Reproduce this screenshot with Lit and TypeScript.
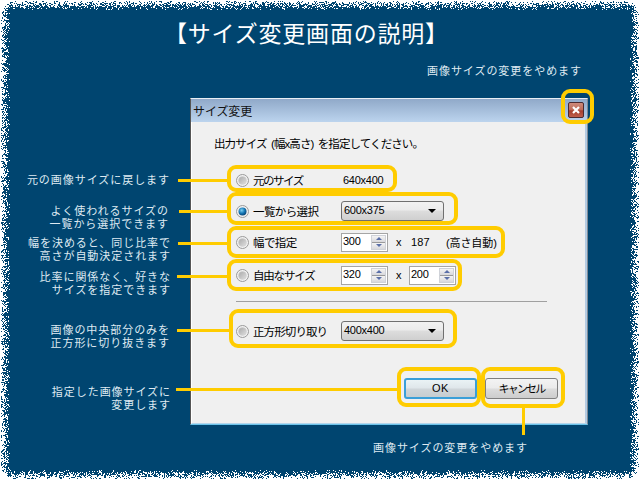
import { LitElement, html, css, svg } from "lit";
import { customElement } from "lit/decorators.js";

function noisePath(): string {
  let seed = 12345;
  const rnd = () => {
    seed = (seed * 1664525 + 1013904223) >>> 0;
    return seed / 4294967296;
  };
  const W = 640, H = 480, R = 9, N = 10;
  let d = "";
  for (let y = 0; y < H; y++) {
    for (let x = 0; x < W; x++) {
      let dist = Math.min(x, y, W - 1 - x, H - 1 - y);
      const cx = x < R + 4 ? R + 4 - x : x > W - R - 5 ? x - (W - R - 5) : 0;
      const cy = y < R + 4 ? R + 4 - y : y > H - R - 5 ? y - (H - R - 5) : 0;
      if (cx > 0 && cy > 0) dist = R + 4 - Math.sqrt(cx * cx + cy * cy);
      if (dist >= N) continue;
      const p = dist < 1 ? 1 : Math.max(0, 0.92 - dist * 0.095);
      if (rnd() < p) d += `M${x} ${y}h1v1h-1z`;
    }
  }
  return d;
}
const NOISE = noisePath();

const NOTES = [
  { top: 174, right: 470, lines: ["元の画像サイズに戻します"] },
  { top: 205, right: 471, lines: ["よく使われるサイズの", "一覧から選択できます"] },
  { top: 237, right: 469, lines: ["幅を決めると、同じ比率で", "高さが自動決定されます"] },
  { top: 271, right: 469, lines: ["比率に関係なく、好きな", "サイズを指定できます"] },
  { top: 324, right: 470, lines: ["画像の中央部分のみを", "正方形に切り抜きます"] },
  { top: 386, right: 469, lines: ["指定した画像サイズに", "変更します"] },
];
const BOXES = [
  [227, 165, 170, 27], [227, 192, 231, 33], [227, 226, 278, 32], [227, 259, 235, 32],
  [229, 309, 228, 39], [397, 367, 84, 40], [481, 367, 84, 41], [561, 89, 33, 35],
];
const LINES = [
  [178, 179, 50, 3], [179, 210, 49, 3], [178, 242, 50, 3], [177, 275, 51, 3],
  [177, 329, 53, 3], [176, 388, 222, 3], [522, 408, 3, 27],
];

@customElement("app-root")
export class AppRoot extends LitElement {
  static styles = css`
    :host { display: block; width: 640px; height: 480px; }
    * { box-sizing: border-box; }
    .page {
      position: relative; width: 640px; height: 480px; overflow: hidden;
      background: #004570; color: #000;
      font-family: "Liberation Sans", "Noto Sans CJK JP", sans-serif;
    }
    .noise { position: absolute; inset: 0; }
    .title {
      position: absolute; left: 164px; top: 18px; font-size: 23px; line-height: 32px;
      color: #fff; letter-spacing: 0.8px; white-space: nowrap;
    }
    .note {
      position: absolute; font-size: 11px; line-height: 13px; color: #dfeaf2;
      letter-spacing: 0.95px; text-align: right; white-space: nowrap;
    }
    .free { position: absolute; font-size: 11px; line-height: 14px; color: #dfeaf2; letter-spacing: 0.95px; white-space: nowrap; }
    .top-note { left: 427px; top: 64px; }
    .bottom-note { left: 373px; top: 441px; }
    .dialog {
      position: absolute; left: 190px; top: 98px; width: 398px; height: 327px;
      display: flex; flex-direction: column;
      background: #f0f0f0;
      border-top: 1px solid #e8eef4; border-left: 1px solid #555; border-right: 1px solid #7f8a95; border-bottom: 1px solid #6cc4ea;
    }
    .titlebar {
      height: 23px; flex: none; display: flex; align-items: center; justify-content: space-between;
      padding: 0 3px 1px 2px; font-size: 12px; letter-spacing: -0.1px; color: #111;
      background: linear-gradient(#90a9c9, #bcd4ee);
    }
    .close { display: block; margin-right: 0; }
    .body {
      flex: 1; display: flex; flex-direction: column; padding: 14px 0 0 0;
      border-left: 1px solid #fff; border-right: 2px solid #b4cbe2; border-bottom: 1px solid #b4d6ec;
      font-size: 11.5px; letter-spacing: -0.6px;
    }
    .prompt { height: 16px; line-height: 16px; padding-left: 22px; font-size: 11.5px; letter-spacing: -0.9px; word-spacing: 2px; }
    .row {
      height: 20px; display: grid; grid-template-columns: 105px auto; align-items: center; padding-left: 44px; flex: none;
    }
    .r1 { margin-top: 18px; }
    .r2 { margin-top: 11px; }
    .r3 { margin-top: 11px; }
    .r4 { margin-top: 13px; }
    .r5 { margin-top: 19px; }
    .choice { display: flex; align-items: center; gap: 4px; white-space: nowrap; }
    .t1 { letter-spacing: -1.5px; }
    .t2 { letter-spacing: -1.2px; }
    .t3 { letter-spacing: -0.9px; }
    .radio { display: block; flex: none; }
    .ctrls { display: flex; align-items: center; font-size: 11px; letter-spacing: -0.25px; }
    .combo {
      width: 103px; height: 20px; display: flex; align-items: center; justify-content: space-between;
      padding: 0 7px 2px 2px; border: 1px solid #707070; border-radius: 3px;
      background: linear-gradient(#f2f2f2 0%, #ebebeb 45%, #dddddd 50%, #cfcfcf 100%);
    }
    .arrow { width: 0; height: 0; border-left: 4px solid transparent; border-right: 4px solid transparent; border-top: 4px solid #000; margin-top: 2px; }
    .spin {
      width: 47px; height: 19px; display: flex; align-items: center; justify-content: space-between;
      background: #fff; border: 1px solid #a5a5a5; padding: 0 1px 2px 1px;
    }
    .spinbtns { width: 15px; height: 15px; margin-top: 2px; display: flex; flex-direction: column; background: #e2e4ea; border: 1px solid #cfd2d8; }
    .spinbtns i { flex: 1; display: flex; align-items: center; justify-content: center; background: linear-gradient(#f4f4f4,#d8d8dc); }
    .spinbtns i + i { border-top: 1px solid #9a9a9a; }
    .up { width: 0; height: 0; border-left: 3px solid transparent; border-right: 3px solid transparent; border-bottom: 3px solid #5a6fa8; }
    .down { width: 0; height: 0; border-left: 3px solid transparent; border-right: 3px solid transparent; border-top: 3px solid #5a6fa8; }
    .times { width: 21px; text-align: center; }
    .auto { letter-spacing: -0.1px; }
    .computed { margin-left: 2px; width: 35px; letter-spacing: 0.1px; }
    .plain { padding-left: 2px; }
    .sep { height: 1px; margin: 16px 38px 0 44px; background: #a0a0a0; flex: none; }
    .actions { display: flex; gap: 8px; padding-left: 212px; margin-top: 37px; }
    .btn {
      width: 73px; height: 21px; display: flex; align-items: center; justify-content: center; padding-bottom: 1px;
      border: 1px solid #7f7f7f; border-radius: 3px; font-size: 11px; letter-spacing: -1.8px;
      background: linear-gradient(#f3f3f3 0%, #ebebeb 48%, #dcdcdc 52%, #cdcdcd 100%);
    }
    .btn.default { border: 2px solid #3a9fd8; border-radius: 3px; background: linear-gradient(#eaf2f5 0%, #dfe6ea 48%, #d0d6da 52%, #c6cdd0 100%); letter-spacing: 0.5px; }
    .box { position: absolute; border: 4px solid #ffcc00; border-radius: 9px; pointer-events: none; }
    .line { position: absolute; background: #ffcc00; }
  `;

  private radio(on = false) {
    return html`<svg class="radio" width="13" height="13" viewBox="0 0 13 13">
      <defs>
        <linearGradient id="rg" x1="0" y1="0" x2="1" y2="1"><stop offset="0" stop-color="#a8a8a8"/><stop offset="1" stop-color="#e0e0e0"/></linearGradient>
        <radialGradient id="rd" cx="0.4" cy="0.35" r="0.7"><stop offset="0" stop-color="#7fd0f2"/><stop offset="0.55" stop-color="#1577b5"/><stop offset="1" stop-color="#0a3f6e"/></radialGradient>
      </defs>
      <circle cx="6.5" cy="6.5" r="6" fill="#f2f2f2" stroke="#9a9a9a"/>
      ${on
        ? svg`<circle cx="6.5" cy="6.5" r="4" fill="url(#rd)"/>`
        : svg`<circle cx="6.5" cy="6.5" r="4" fill="url(#rg)" stroke="#cfcfcf" stroke-width=".5"/>`}
    </svg>`;
  }

  private spin(v: string) {
    return html`<div class="spin"><span>${v}</span><div class="spinbtns"><i><b class="up"></b></i><i><b class="down"></b></i></div></div>`;
  }

  render() {
    return html`<div class="page">
      <svg class="noise" width="640" height="480"><path d=${NOISE} fill="#fff" shape-rendering="crispEdges"/></svg>
      <div class="title">【サイズ変更画面の説明】</div>
      <div class="free top-note">画像サイズの変更をやめます</div>
      <div class="free bottom-note">画像サイズの変更をやめます</div>
      ${NOTES.map(
        (n) => html`<div class="note" style="top:${n.top}px;right:${n.right}px">${n.lines.map((l) => html`<div>${l}</div>`)}</div>`
      )}
      <div class="dialog">
        <div class="titlebar">
          <span>サイズ変更</span>
          <svg class="close" width="16" height="16" viewBox="0 0 16 16">
            <defs><linearGradient id="cg" x1="0" y1="0" x2="0" y2="1"><stop offset="0" stop-color="#d08d7e"/><stop offset="0.5" stop-color="#bd6a58"/><stop offset="0.55" stop-color="#a63d2c"/><stop offset="1" stop-color="#c0614e"/></linearGradient></defs>
            <rect x=".5" y=".5" width="15" height="15" rx="1.5" fill="url(#cg)" stroke="#4b2a30"/>
            <path d="M5 5l6 6M11 5l-6 6" stroke="#fff" stroke-width="2.2" fill="none"/>
          </svg>
        </div>
        <div class="body">
          <div class="prompt">出力サイズ (幅x高さ) を指定してください。</div>
          <div class="row r1">
            <div class="choice">${this.radio()}<span class="t1">元のサイズ</span></div>
            <div class="ctrls"><span class="plain">640x400</span></div>
          </div>
          <div class="row r2">
            <div class="choice">${this.radio(true)}<span>一覧から選択</span></div>
            <div class="ctrls"><div class="combo"><span>600x375</span><span class="arrow"></span></div></div>
          </div>
          <div class="row r3">
            <div class="choice">${this.radio()}<span>幅で指定</span></div>
            <div class="ctrls">${this.spin("300")}<span class="times">x</span><span class="computed">187</span><span class="auto">(高さ自動)</span></div>
          </div>
          <div class="row r4">
            <div class="choice">${this.radio()}<span class="t2">自由なサイズ</span></div>
            <div class="ctrls">${this.spin("320")}<span class="times">x</span>${this.spin("200")}</div>
          </div>
          <div class="sep"></div>
          <div class="row r5">
            <div class="choice">${this.radio()}<span class="t3">正方形切り取り</span></div>
            <div class="ctrls"><div class="combo"><span>400x400</span><span class="arrow"></span></div></div>
          </div>
          <div class="actions">
            <div class="btn default">OK</div>
            <div class="btn">キャンセル</div>
          </div>
        </div>
      </div>
      ${LINES.map(([x, y, w, h]) => html`<div class="line" style="left:${x}px;top:${y}px;width:${w}px;height:${h}px"></div>`)}
      ${BOXES.map(([x, y, w, h]) => html`<div class="box" style="left:${x}px;top:${y}px;width:${w}px;height:${h}px"></div>`)}
    </div>`;
  }
}
